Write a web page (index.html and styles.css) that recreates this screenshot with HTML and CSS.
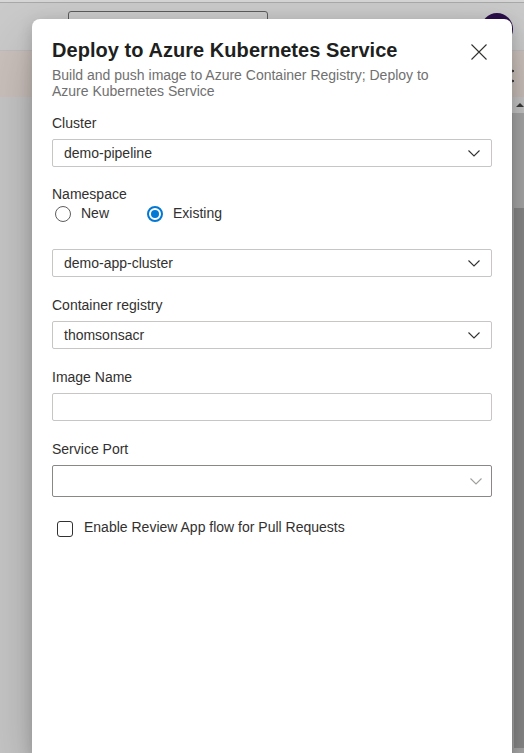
FILE: index.html
```html
<!DOCTYPE html>
<html lang="en">
<head>
<meta charset="utf-8">
<title>Deploy to Azure Kubernetes Service</title>
<link rel="stylesheet" href="styles.css">
</head>
<body>
<div class="page">
  <div class="topline"></div>
  <header class="header">
    <div class="search"></div>
    <div class="avatar"></div>
  </header>
  <div class="band"><span class="kebab"></span></div>
  <div class="content">
    <div class="main"></div>
    <div class="scrollbar">
      <div class="sb-button"><span class="sb-arrow"></span></div>
      <div class="sb-track"><div class="sb-thumb"></div></div>
    </div>
  </div>
</div>

<div class="modal" role="dialog" aria-labelledby="dlg-title">
  <div class="modal-head">
    <div class="modal-titles">
      <h1 id="dlg-title" class="modal-title">Deploy to Azure Kubernetes Service</h1>
      <p class="modal-sub">Build and push image to Azure Container Registry; Deploy to Azure Kubernetes Service</p>
    </div>
    <button class="close" aria-label="Close">
      <svg width="16" height="16" viewBox="0 0 16 16"><path d="M0.5 0.5 L15.5 15.5 M15.5 0.5 L0.5 15.5" stroke="#323130" stroke-width="1.1" fill="none"/></svg>
    </button>
  </div>

  <div class="field">
    <div class="label">Cluster</div>
    <div class="select">
      <span class="value">demo-pipeline</span>
      <svg class="chev" width="12" height="7" viewBox="0 0 12 7"><path d="M0.5 0.5 L6 6 L11.5 0.5" stroke="#323130" stroke-width="1.1" fill="none"/></svg>
    </div>
  </div>

  <div class="field">
    <div class="label label-tight">Namespace</div>
    <div class="radios">
      <label class="radio"><span class="circle"></span><span>New</span></label>
      <label class="radio"><span class="circle checked"></span><span>Existing</span></label>
    </div>
    <div class="select select-spaced">
      <span class="value">demo-app-cluster</span>
      <svg class="chev" width="12" height="7" viewBox="0 0 12 7"><path d="M0.5 0.5 L6 6 L11.5 0.5" stroke="#323130" stroke-width="1.1" fill="none"/></svg>
    </div>
  </div>

  <div class="field">
    <div class="label">Container registry</div>
    <div class="select">
      <span class="value">thomsonsacr</span>
      <svg class="chev" width="12" height="7" viewBox="0 0 12 7"><path d="M0.5 0.5 L6 6 L11.5 0.5" stroke="#323130" stroke-width="1.1" fill="none"/></svg>
    </div>
  </div>

  <div class="field">
    <div class="label">Image Name</div>
    <div class="input"></div>
  </div>

  <div class="field">
    <div class="label">Service Port</div>
    <div class="combo">
      <svg class="chev" width="12" height="7" viewBox="0 0 12 7"><path d="M0.5 0.5 L6 6 L11.5 0.5" stroke="#a19f9d" stroke-width="1.1" fill="none"/></svg>
    </div>
  </div>

  <label class="check"><span class="box"></span><span>Enable Review App flow for Pull Requests</span></label>
</div>
</body>
</html>
```

FILE: styles.css
```css
html, body {
  margin: 0;
  padding: 0;
  height: 753px;
  overflow: hidden;
}
body {
  font-family: "Liberation Sans", Arial, sans-serif;
  background: #c6c6c6;
  position: relative;
}
.page {
  display: flex;
  flex-direction: column;
  height: 753px;
}
.topline {
  height: 2px;
  background: #d6d6d6;
  border-bottom: 1px solid #a9a9a9;
}
.header {
  height: 48px;
  background: #cacaca;
  border-bottom: 1px solid #bdbdbd;
  display: flex;
  align-items: flex-start;
  justify-content: space-between;
  box-sizing: border-box;
  padding: 8px 11px 0 68px;
}
.search {
  width: 200px;
  height: 32px;
  box-sizing: border-box;
  border: 1px solid #5c5c5c;
  border-radius: 3px;
  background: #cdcdcd;
}
.avatar {
  width: 32px;
  height: 32px;
  margin-top: 2px;
  border-radius: 50%;
  background: #2b0e4a;
}
.band {
  height: 46px;
  background: #cbc1bc;
  display: flex;
  justify-content: flex-end;
  padding-right: 10px;
  box-sizing: border-box;
  padding-top: 18px;
}
.kebab {
  width: 3px;
  height: 14px;
  background: radial-gradient(circle at 1.5px 2px, #444 1.2px, transparent 1.6px),
              radial-gradient(circle at 1.5px 12px, #444 1.2px, transparent 1.6px);
}
.content {
  flex: 1;
  display: flex;
}
.main {
  flex: 1;
}
.scrollbar {
  width: 12px;
  display: flex;
  flex-direction: column;
}
.sb-button {
  height: 16px;
  background: #c8c8c8;
  display: flex;
  justify-content: center;
  align-items: center;
  padding-left: 3px;
}
.sb-arrow {
  width: 0;
  height: 0;
  border-left: 4px solid transparent;
  border-right: 4px solid transparent;
  border-bottom: 4px solid #3c3c3c;
}
.sb-track {
  flex: 1;
  background: #a9a9a9;
  border-left: 1px solid #a2a2a2;
  padding-top: 95px;
  padding-bottom: 5px;
  display: flex;
  flex-direction: column;
}
.sb-thumb {
  flex: 1;
  margin-left: 1px;
  background: #8a8a8a;
}

/* Modal */
.modal {
  position: absolute;
  left: 32px;
  top: 19px;
  width: 480px;
  height: 734px;
  box-sizing: border-box;
  background: #ffffff;
  border-radius: 8px 8px 0 0;
  box-shadow: 0 25.6px 57.6px 0 rgba(0,0,0,0.22), 0 4.8px 14.4px 0 rgba(0,0,0,0.18);
  padding: 17px 20px 0 20px;
  color: #323130;
}
.modal-head {
  display: flex;
  align-items: flex-start;
  margin-bottom: 14px;
}
.modal-titles {
  flex: 1;
  padding-right: 18px;
}
.modal-title {
  margin: 0;
  font-size: 20px;
  line-height: 28px;
  font-weight: 700;
  color: #201f1e;
  letter-spacing: 0.05px;
}
.modal-sub {
  margin: 3px 0 0 0;
  font-size: 14px;
  line-height: 16px;
  color: #707070;
}
.close {
  width: 32px;
  height: 32px;
  margin-right: -3px;
  border: none;
  background: transparent;
  padding: 0;
  display: flex;
  align-items: center;
  justify-content: center;
  flex: none;
}
.field {
  margin-bottom: 18px;
}
.label {
  font-size: 14px;
  line-height: 20px;
  margin-bottom: 6px;
  color: #323130;
}
.label-tight {
  line-height: 18px;
  margin-bottom: 0;
}
.select, .input, .combo {
  box-sizing: border-box;
  height: 28px;
  border: 1px solid #c8c6c4;
  border-radius: 2px;
  display: flex;
  align-items: center;
  justify-content: space-between;
  padding: 0 11px 0 11px;
  font-size: 14px;
  color: #323130;
}
.select-spaced {
  margin-top: 26px;
}
.combo {
  height: 32px;
  border-color: #8a8886;
  justify-content: flex-end;
  padding-right: 9px;
}
.chev {
  display: block;
  flex: none;
}
.radios {
  display: flex;
  gap: 38px;
  padding-left: 3px;
  height: 20px;
  align-items: center;
}
.radio {
  display: flex;
  align-items: center;
  font-size: 14px;
  line-height: 20px;
  gap: 10px;
}
.circle {
  width: 16px;
  height: 16px;
  box-sizing: border-box;
  border: 1px solid #605e5c;
  border-radius: 50%;
  position: relative;
  margin-top: 2px;
}
.circle.checked {
  border: 2px solid #0078d4;
}
.circle.checked::after {
  content: "";
  position: absolute;
  left: 2px;
  top: 2px;
  width: 8px;
  height: 8px;
  border-radius: 50%;
  background: #0078d4;
}
.check {
  display: flex;
  align-items: center;
  gap: 11px;
  padding-left: 5px;
  margin-top: 20px;
  font-size: 14px;
  line-height: 20px;
  color: #323130;
}
.box {
  width: 16px;
  height: 16px;
  box-sizing: border-box;
  border: 1px solid #323130;
  border-radius: 3px;
  margin-top: 4px;
}
```
